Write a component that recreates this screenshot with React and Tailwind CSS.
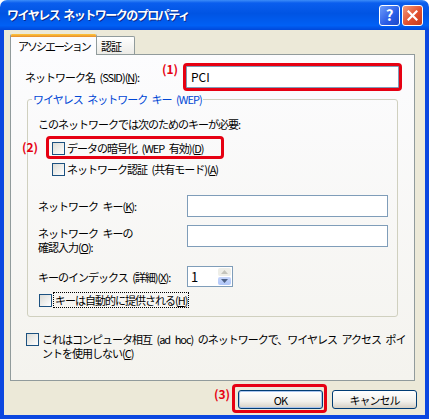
const jp = "font-['Noto_Sans_CJK_JP','Noto_Sans',sans-serif]"

function Check({ children, className = '' }) {
  return (
    <div className={`flex items-center h-[14px] ${className}`}>
      <span className="w-[13px] h-[13px] shrink-0 border border-[#1C5180] bg-[linear-gradient(135deg,#DCDCD7,#FFFFFF)]" />
      <span className="ml-[2px] whitespace-nowrap">{children}</span>
    </div>
  )
}

function Field({ className = '' }) {
  return <div className={`h-[22px] bg-white border border-[#7F9DB9] ${className}`} />
}

function Red({ children }) {
  return <span className="absolute font-bold text-[12px] leading-[12px] text-[#E60012] tracking-[0px] whitespace-nowrap">{children}</span>
}

function Btn({ children, def }) {
  return (
    <button
      className={`w-[85px] h-[19px] rounded-[3px] border border-[#003C74] bg-[linear-gradient(to_bottom,#FFFFFF,#F2F1EC_60%,#D6D0C5)] text-[11px] leading-[14px] ${
        def ? 'shadow-[inset_0_0_0_1px_#A8C4EE]' : ''
      }`}
    >
      {children}
    </button>
  )
}

export default function App() {
  return (
    <div className={`w-[429px] h-[419px] flex flex-col overflow-hidden text-[11px] leading-[14px] tracking-[-1px] [word-spacing:3px] text-black ${jp}`}>
      {/* title bar */}
      <div className="h-[30px] shrink-0 flex items-center rounded-t-[7px] bg-[linear-gradient(to_bottom,#3C8CF8_0%,#0A5EEE_10%,#0054E3_45%,#0060F5_85%,#0048DA_100%)] pl-[7px] pr-[6px]">
        <span className="flex-1 whitespace-nowrap text-white font-bold text-[12px] tracking-[-1.5px] [text-shadow:1px_1px_#0A2A8C]">
          ワイヤレス ネットワークのプロパティ
        </span>
        <div className="flex gap-[2px]">
          <div className="w-[21px] h-[21px] rounded-[3px] border border-white bg-[linear-gradient(135deg,#6C9CFA,#2A5CE6_60%,#1D48C8)] flex items-center justify-center text-white font-bold text-[15px] tracking-[0px]">
            ?
          </div>
          <div className="w-[21px] h-[21px] rounded-[3px] border border-white bg-[linear-gradient(135deg,#F29C7C,#E2502E_55%,#C63B1E)] flex items-center justify-center">
            <svg width="11" height="11" viewBox="0 0 11 11">
              <path d="M1.5 1.5 L9.5 9.5 M9.5 1.5 L1.5 9.5" stroke="white" strokeWidth="2.2" strokeLinecap="square" />
            </svg>
          </div>
        </div>
      </div>

      {/* client area */}
      <div className="flex-1 flex flex-col bg-[#ECE9D8] border-x-4 border-b-4 border-[#0B47E0] pl-[6px] pt-[4px]">
        {/* tabs */}
        <div className="relative z-10 flex items-end h-[21px] -mb-px">
          <div className="w-[87px] h-[21px] border-x border-[#919B9C] bg-[#FCFCFE] flex flex-col rounded-t-[2px] overflow-hidden">
            <div className="h-[3px] bg-[linear-gradient(to_bottom,#FFC83C,#E68B2C)]" />
            <div className="flex-1 flex items-center pl-[7px] whitespace-nowrap tracking-[-2px]">アソシエーション</div>
          </div>
          <div className="w-[38px] h-[18px] border-t border-r border-[#919B9C] bg-[linear-gradient(to_bottom,#FFFFFF,#ECEBE6)] flex items-center pl-[4px] rounded-tr-[2px] mb-px whitespace-nowrap">
            認証
          </div>
        </div>

        {/* panel */}
        <div className="w-[405px] h-[327px] shrink-0 border border-[#919B9C] bg-[linear-gradient(to_bottom,#FCFCFE,#F4F3EE)] flex flex-col">
          <div className="flex items-center mt-[11px] pl-[14px]">
            <span className="w-[161px] whitespace-nowrap">
              ネットワーク名 (SSID)(<u>N</u>):
            </span>
            <div className="relative">
              <Field className="w-[213px]" />
              <span className="absolute left-[5px] top-[4px] text-[12px] tracking-[0px]">PCI</span>
              <span className="absolute -inset-x-[3px] -inset-y-[3px] border-[3px] border-[#E60012] rounded-[4px]" />
              <span className="absolute -left-[24px] -top-[3px]">
                <Red>(1)</Red>
              </span>
            </div>
          </div>

          <fieldset className="mt-[4px] ml-[16px] w-[371px] border border-[#D0D0BF] rounded-[3px] pb-[9px]">
            <legend className="ml-[4px] px-[1px] text-[#0046D5] whitespace-nowrap">ワイヤレス ネットワーク キー (WEP)</legend>
            <div className="mt-[11px] pl-[10px] whitespace-nowrap">このネットワークでは次のためのキーが必要:</div>

            <div className="relative mt-[10px] ml-[24px] w-fit">
              <Check>
                データの暗号化 (WEP 有効)(<u>D</u>)
              </Check>
              <span className="absolute -left-[6px] -top-[5px] w-[178px] h-[23px] border-[3px] border-[#E60012] rounded-[4px]" />
              <span className="absolute -left-[30px] top-0">
                <Red>(2)</Red>
              </span>
            </div>
            <Check className="mt-[7px] ml-[24px]">
              ネットワーク認証 (共有モード)(<u>A</u>)
            </Check>

            <div className="flex items-center mt-[19px] pl-[10px]">
              <span className="w-[149px] whitespace-nowrap">
                ネットワーク キー(<u>K</u>):
              </span>
              <Field className="w-[201px]" />
            </div>
            <div className="flex items-start mt-[8px] pl-[10px]">
              <span className="w-[149px] pt-[1px] whitespace-nowrap">
                ネットワーク キーの
                <br />
                確認入力(<u>O</u>):
              </span>
              <Field className="w-[201px]" />
            </div>
            <div className="flex items-center mt-[12px] pl-[10px]">
              <span className="w-[149px] whitespace-nowrap">
                キーのインデックス (詳細)(<u>X</u>):
              </span>
              <div className="w-[46px] h-[21px] bg-white border border-[#7F9DB9] flex">
                <span className="flex-1 pl-[3px] text-[13px] leading-[19px] tracking-[0px]">1</span>
                <div className="w-[15px] flex flex-col p-[1px] gap-[1px]">
                  <div className="flex-1 rounded-[2px] bg-[#EEEEE8] flex items-center justify-center">
                    <svg width="7" height="4" viewBox="0 0 7 4">
                      <path d="M0 4 L3.5 0 L7 4 Z" fill="#C4C4BC" />
                    </svg>
                  </div>
                  <div className="flex-1 rounded-[2px] bg-[linear-gradient(to_bottom,#C6D6FB,#B0C6F8)] flex items-center justify-center">
                    <svg width="7" height="4" viewBox="0 0 7 4">
                      <path d="M0 0 L3.5 4 L7 0 Z" fill="#4D6185" />
                    </svg>
                  </div>
                </div>
              </div>
            </div>
            <div className="flex items-center h-[14px] mt-[6px] ml-[11px]">
              <span className="w-[13px] h-[13px] shrink-0 border border-[#1C5180] bg-[linear-gradient(135deg,#DCDCD7,#FFFFFF)]" />
              <span className="ml-[2px] px-[1px] whitespace-nowrap outline outline-1 outline-dotted outline-black">
                キーは自動的に提供される(<u>H</u>)
              </span>
            </div>
          </fieldset>

          <div className="flex items-start mt-[16px] ml-[15px]">
            <span className="w-[13px] h-[13px] shrink-0 border border-[#1C5180] bg-[linear-gradient(135deg,#DCDCD7,#FFFFFF)]" />
            <span className="ml-[3px] -mt-[1px] whitespace-nowrap">
              これはコンピュータ相互 (ad hoc) のネットワークで、ワイヤレス アクセス ポイ
              <br />
              ントを使用しない(<u>C</u>)
            </span>
          </div>
        </div>

        {/* buttons */}
        <div className="flex justify-end gap-[9px] mt-[9px] pr-[8px]">
          <div className="relative">
            <Btn def>OK</Btn>
            <span className="absolute -left-[6px] -top-[6px] w-[95px] h-[29px] border-[3px] border-[#E60012] rounded-[4px]" />
            <span className="absolute -left-[24px] -top-[2px]">
              <Red>(3)</Red>
            </span>
          </div>
          <Btn>キャンセル</Btn>
        </div>
      </div>
    </div>
  )
}
